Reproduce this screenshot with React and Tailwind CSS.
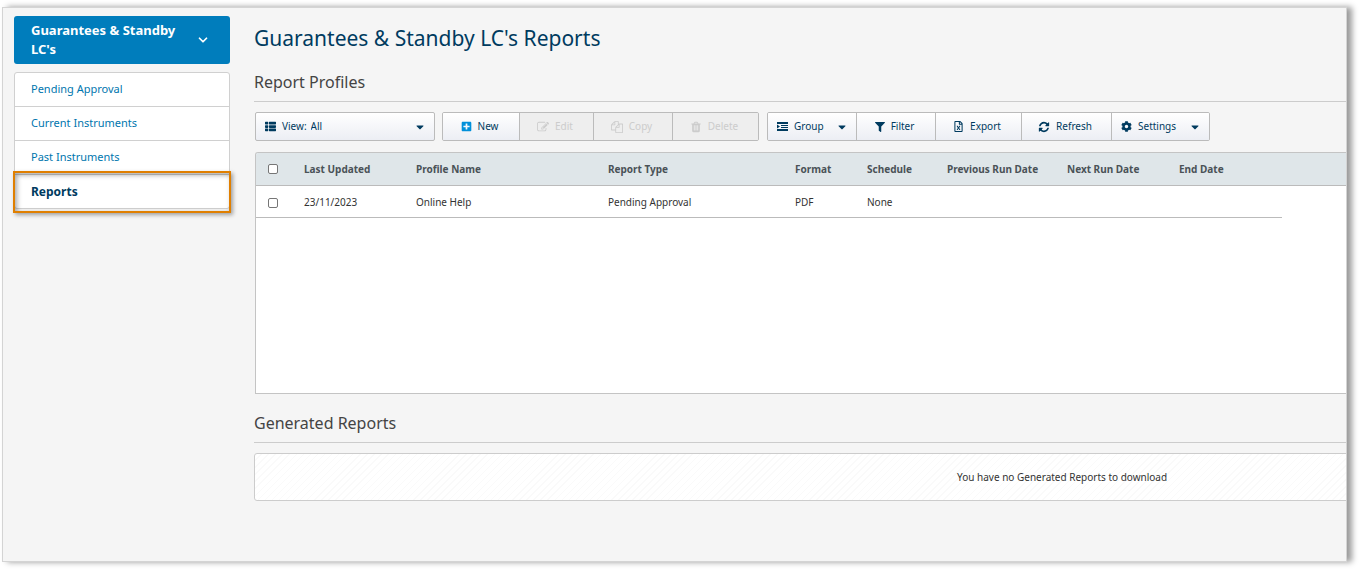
import React, { useState } from "react";
import { FaThList, FaPlusSquare, FaFilter, FaRegFileExcel, FaCog, FaCaretDown } from "react-icons/fa";
import { FiChevronDown } from "react-icons/fi";
import clsx from "clsx";

const navItems = ["Pending Approval", "Current Instruments", "Past Instruments", "Reports"];

const columns = [
  { key: "updated", label: "Last Updated", width: "w-[112px]" },
  { key: "name", label: "Profile Name", width: "w-[192px]" },
  { key: "type", label: "Report Type", width: "w-[187px]" },
  { key: "format", label: "Format", width: "w-[72px]" },
  { key: "schedule", label: "Schedule", width: "w-[80px]" },
  { key: "previous", label: "Previous Run Date", width: "w-[120px]" },
  { key: "next", label: "Next Run Date", width: "w-[112px]" },
  { key: "end", label: "End Date", width: "w-[119px]" },
];

const profiles = [
  { updated: "23/11/2023", name: "Online Help", type: "Pending Approval", format: "PDF", schedule: "None" },
];

const EditIcon = () => (
  <svg viewBox="0 0 1792 1792" fill="currentColor" className="size-3">
    <path d="M888 1184l116-116-152-152-116 116v56h96v96h56zm440-720q-16-16-33 1l-350 350q-17 17-1 33t33-1l350-350q17-17 1-33zm80 594v190q0 119-84.5 203.5t-203.5 84.5h-832q-119 0-203.5-84.5t-84.5-203.5v-832q0-119 84.5-203.5t203.5-84.5h832q63 0 117 25 15 7 18 23 3 17-9 29l-49 49q-14 14-32 8-23-6-45-6h-832q-66 0-113 47t-47 113v832q0 66 47 113t113 47h832q66 0 113-47t47-113v-126q0-13 9-22l64-64q15-15 35-7t20 29zm-96-738l288 288-672 672h-288v-288zm444 132l-92 92-288-288 92-92q28-28 68-28t68 28l152 152q28 28 28 68t-28 68z" />
  </svg>
);

const CopyIcon = () => (
  <svg viewBox="0 0 1792 1792" fill="currentColor" className="size-3">
    <path d="M1696 384q40 0 68 28t28 68v1216q0 40-28 68t-68 28h-960q-40 0-68-28t-28-68v-288h-544q-40 0-68-28t-28-68v-672q0-40 20-88t48-76l408-408q28-28 76-48t88-20h416q40 0 68 28t28 68v328q68-40 128-40h416zm-544 213l-299 299h299v-299zm-640-384l-299 299h299v-299zm196 647l316-316v-416h-384v416q0 40-28 68t-68 28h-416v640h512v-256q0-40 20-88t48-76zm956 804v-1152h-384v416q0 40-28 68t-68 28h-416v640h896z" />
  </svg>
);

const TrashIcon = () => (
  <svg viewBox="0 0 1792 1792" fill="currentColor" className="size-3">
    <path d="M704 1376v-704q0-14-9-23t-23-9h-64q-14 0-23 9t-9 23v704q0 14 9 23t23 9h64q14 0 23-9t9-23zm256 0v-704q0-14-9-23t-23-9h-64q-14 0-23 9t-9 23v704q0 14 9 23t23 9h64q14 0 23-9t9-23zm256 0v-704q0-14-9-23t-23-9h-64q-14 0-23 9t-9 23v704q0 14 9 23t23 9h64q14 0 23-9t9-23zm-544-992h448l-48-117q-7-9-17-11h-317q-10 2-17 11zm928 32v64q0 14-9 23t-23 9h-96v948q0 83-47 143.5t-113 60.5h-832q-66 0-113-58.5t-47-141.5v-952h-96q-14 0-23-9t-9-23v-64q0-14 9-23t23-9h309l70-167q15-37 54-63t79-26h320q40 0 79 26t54 63l70 167h309q14 0 23 9t9 23z" />
  </svg>
);

const RefreshIcon = () => (
  <svg viewBox="0 0 1792 1792" fill="currentColor" className="size-3">
    <path d="M1639 1056q0 5-1 7-64 268-268 434.5t-478 166.5q-146 0-282.5-55t-243.5-157l-129 129q-19 19-45 19t-45-19-19-45v-448q0-26 19-45t45-19h448q26 0 45 19t19 45-19 45l-137 137q71 66 161 102t187 36q134 0 250-65t186-179q11-17 53-117 8-23 30-23h192q13 0 22.500 9.500t9.500 22.500zm25-800v448q0 26-19 45t-45 19h-448q-26 0-45-19t-19-45 19-45l138-138q-148-137-349-137-134 0-250 65t-186 179q-11 17-53 117-8 23-30 23h-199q-13 0-22.500-9.500t-9.500-22.500v-7q65-268 270-434.500t480-166.500q146 0 284 55.500t245 156.500l130-129q19-19 45-19t45 19 19 45z" />
  </svg>
);

const GroupIcon = () => (
  <svg viewBox="0 0 11 9" fill="currentColor" className="h-[9px] w-[11px]">
    <path d="M0 0h11v2H0zM4 3h7v1H4zM4 5h7v1H4zM0 7h11v2H0zM0 2.500L3 4.500 0 6.500z" />
  </svg>
);

const ToolButton = ({ icon, label, width, menu, disabled, onClick }) => (
  <button
    type="button"
    disabled={disabled}
    onClick={onClick}
    aria-haspopup={menu ? "menu" : undefined}
    className={clsx(
      "flex h-full items-center gap-[6px] border-r border-[#bbb] last:border-r-0",
      width,
      menu ? "pl-[9px] pr-2" : "justify-center pr-[3px]",
      disabled ? "bg-[#eee] text-[#ccc]" : "bg-linear-to-b from-white to-[#eceef4] text-[#003b5f]"
    )}
  >
    {icon}
    <span>{label}</span>
    {menu && <FaCaretDown className="ml-auto size-3" />}
  </button>
);

const ToolGroup = ({ children }) => (
  <div className="flex h-[29px] shrink-0 overflow-hidden rounded-xs border border-[#bbb]">{children}</div>
);

const Sidebar = ({ active, setActive }) => (
  <aside className="w-[216px] shrink-0 pt-2">
    <button
      type="button"
      className="flex h-12 w-full items-center justify-between rounded-[3px] bg-[#007dbc] pl-[17px] pr-5 text-left text-[13px] font-bold leading-[19px] text-white"
    >
      <span className="w-[150px]">Guarantees &amp; Standby LC's</span>
      <FiChevronDown className="size-[14px] shrink-0" strokeWidth={3} />
    </button>
    <nav className="relative mt-2 rounded-[3px] border border-[#d0d0d0] bg-white">
      {navItems.map((item) => (
        <a
          key={item}
          href="#"
          onClick={() => setActive(item)}
          className={clsx(
            "flex h-[34px] items-center border-b border-[#d0d0d0] pl-4 last-of-type:h-[33px] last-of-type:border-b-0",
            item === active ? "text-[12px] font-bold text-[#003b5f]" : "text-[11px] text-[#0076ae]"
          )}
        >
          {item}
        </a>
      ))}
      <div className="pointer-events-none absolute -inset-x-[2px] -bottom-[5px] h-[42px] border-2 border-[#e07f00] shadow-[2px_2px_4px_rgba(0,0,0,0.35),inset_2px_2px_5px_rgba(0,0,0,0.35)]" />
    </nav>
  </aside>
);

const ProfilesTable = () => {
  const [selected, setSelected] = useState([]);
  const toggle = (i) => {
    setSelected(selected.includes(i) ? selected.filter((s) => s !== i) : [...selected, i]);
  };

  return (
    <div className="ml-px mt-[11px] min-h-[242px] overflow-hidden rounded-tl-[3px] border border-r-0 border-[#c4c4c4] bg-white">
      <table className="w-full table-fixed border-separate border-spacing-0 text-left text-[10px] text-[#333]">
        <thead>
          <tr className="h-[33px] bg-[#dfe6e9] text-[#4a5257]">
            <th className="w-8 border-b border-[#bbb] pl-3">
              <input
                type="checkbox"
                aria-label="Select all profiles"
                className="block size-[10px] appearance-none rounded-xs border border-[#767676] bg-white checked:bg-[#007dbc]"
                checked={selected.length === profiles.length}
                onChange={(e) => setSelected(e.target.checked ? profiles.map((p, i) => i) : [])}
              />
            </th>
            {columns.map((col) => (
              <th key={col.key} className={clsx("whitespace-nowrap border-b border-[#bbb] pl-4 font-bold", col.width)}>
                {col.label}
              </th>
            ))}
            <th className="border-b border-[#bbb]"></th>
          </tr>
        </thead>
        <tbody>
          {profiles.map((row, i) => (
            <tr key={row.name} className="h-8">
              <td className="border-b border-[#bbb] pl-3 pt-[2px]">
                <input
                  type="checkbox"
                  aria-label={"Select " + row.name}
                  className="block size-[10px] appearance-none rounded-xs border border-[#767676] bg-white checked:bg-[#007dbc]"
                  checked={selected.includes(i)}
                  onChange={() => toggle(i)}
                />
              </td>
              {columns.map((col) => (
                <td key={col.key} className="whitespace-nowrap border-b border-[#bbb] pl-4 pt-[2px]">
                  {row[col.key]}
                </td>
              ))}
              <td></td>
            </tr>
          ))}
        </tbody>
      </table>
    </div>
  );
};

const SectionTitle = ({ children }) => (
  <h2 className="border-b border-[#ccc] pb-[7px] text-[16px] leading-6 text-[#444]">{children}</h2>
);

const App = () => {
  const [active, setActive] = useState("Reports");

  return (
    <div className="bg-white pb-[7px] pl-[2px] pr-3 pt-[7px] font-['Noto_Sans',sans-serif]">
      <div className="flex gap-6 border border-[#d4d4d4] bg-[#f5f5f5] pl-[11px] shadow-[5px_0_6px_rgba(0,0,0,0.4)]">
        <Sidebar active={active} setActive={setActive} />
        <main className="min-w-0 flex-1 overflow-hidden pb-[60px] pt-[14px]">
          <h1 className="mb-4 text-[21px] leading-8 text-[#003b5f]">Guarantees &amp; Standby LC's Reports</h1>

          <SectionTitle>Report Profiles</SectionTitle>
          <div className="ml-px mt-[10px] flex text-[10px]">
            <label className="mr-[7px] flex h-[29px] w-[180px] shrink-0 items-center rounded-xs border border-[#bbb] bg-linear-to-b from-white to-[#eceef4] pl-[9px] pr-2 text-[#003b5f]">
              <FaThList className="mr-[6px] size-[11px]" />
              <span className="mr-1">View:</span>
              <select className="min-w-0 flex-1 appearance-none bg-transparent">
                <option>All</option>
              </select>
              <FaCaretDown className="size-3" />
            </label>
            <div className="mr-2">
              <ToolGroup>
                <ToolButton width="w-[77px]" icon={<FaPlusSquare className="size-[11px] text-[#0090da]" />} label="New" />
                <ToolButton width="w-[74px]" icon={<EditIcon />} label="Edit" disabled />
                <ToolButton width="w-[79px]" icon={<CopyIcon />} label="Copy" disabled />
                <ToolButton width="w-[85px]" icon={<TrashIcon />} label="Delete" disabled />
              </ToolGroup>
            </div>
            <ToolGroup>
              <ToolButton width="w-[89px]" icon={<GroupIcon />} label="Group" menu />
              <ToolButton width="w-[79px]" icon={<FaFilter className="size-[10px]" />} label="Filter" />
              <ToolButton width="w-[86px]" icon={<FaRegFileExcel className="size-[11px]" />} label="Export" />
              <ToolButton width="w-[90px]" icon={<RefreshIcon />} label="Refresh" />
              <ToolButton width="w-[97px]" icon={<FaCog className="size-[11px]" />} label="Settings" menu />
            </ToolGroup>
          </div>
          <ProfilesTable />

          <div className="mt-[17px]">
            <SectionTitle>Generated Reports</SectionTitle>
          </div>
          {/* panel runs past the visible edge */}
          <div className="mt-[10px] w-[148%] rounded-[3px] border border-[#ccc] bg-white bg-[repeating-linear-gradient(135deg,#fff_0px,#fff_4px,#fafafa_4px,#fafafa_5px)] py-[15px] text-center text-[10px] leading-4 text-[#333]">
            You have no Generated Reports to download
          </div>
        </main>
      </div>
    </div>
  );
};

export default App;
